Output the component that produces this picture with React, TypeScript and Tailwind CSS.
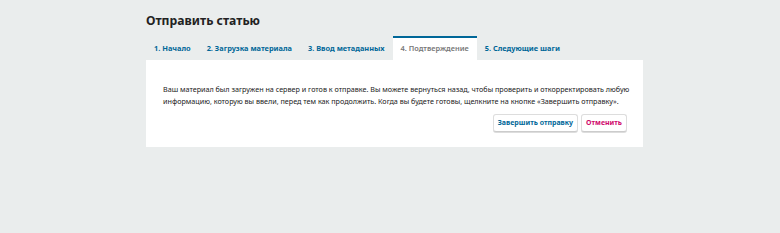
const tabs = ['1. Начало', '2. Загрузка материала', '3. Ввод метаданных', '4. Подтверждение', '5. Следующие шаги']

export default function App() {
  const active = 3
  return (
    <div className="min-h-[233px] bg-[#eaeded] font-['Noto_Sans',sans-serif]">
      <div className="ml-[146px] w-[497px] pt-[14px]">
        <h1 className="text-[12.2px] leading-[13px] font-bold text-[#222]">Отправить статью</h1>
        <div className="mt-[9px] flex">
          {tabs.map((t, i) => (
            <div
              key={t}
              className={
                i === active
                  ? 'h-[24px] border-t-2 border-[#006798] bg-white px-[8px] pt-[5px] text-[7.4px] font-semibold text-[#777]'
                  : 'h-[24px] border-t-2 border-transparent px-[8px] pt-[5px] text-[7.4px] font-bold text-[#006798]'
              }
            >
              {t}
            </div>
          ))}
        </div>
        <div className="h-[87px] bg-white pl-[17px] pr-[12px] pt-[23px]">
          <p className="text-[7.2px] leading-[12px] text-[#222]">
            Ваш материал был загружен на сервер и готов к отправке. Вы можете вернуться назад, чтобы проверить и откорректировать любую информацию, которую вы ввели, перед тем как продолжить. Когда вы будете готовы, щелкните на кнопке «Завершить отправку».
          </p>
          <div className="mt-[7px] mr-[4px] flex justify-end gap-[3px]">
            <button className="h-[18px] rounded-[3px] border border-[#ddd] border-b-[#ccc] bg-white px-[4px] text-[7px] font-bold text-[#006798] shadow-[0_1px_0_#ddd]">
              Завершить отправку
            </button>
            <button className="h-[18px] rounded-[3px] border border-[#ddd] border-b-[#ccc] bg-white px-[4px] text-[7px] font-bold text-[#d00a6c] shadow-[0_1px_0_#ddd]">
              Отменить
            </button>
          </div>
        </div>
      </div>
    </div>
  )
}
